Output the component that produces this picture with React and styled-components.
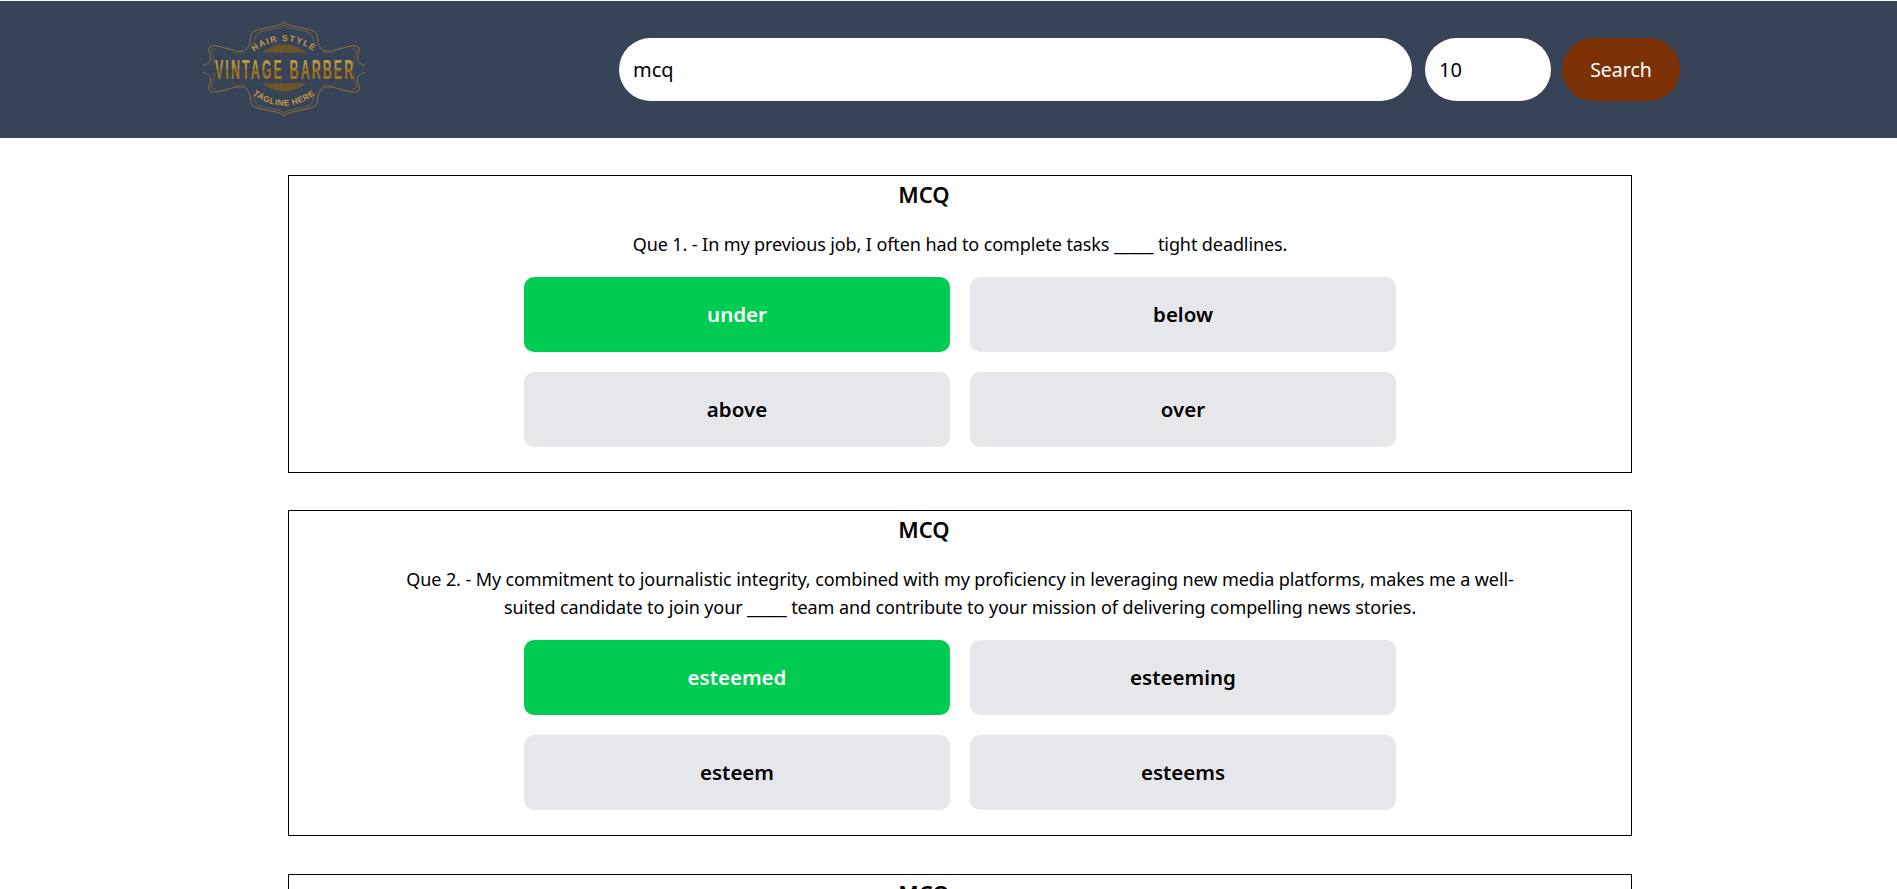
import React from "react";
import styled, { createGlobalStyle } from "styled-components";

const GlobalStyle = createGlobalStyle`
  html, body {
    margin: 0;
    height: 889px;
    overflow: hidden;
    background: #fff;
  }
  body {
    font-family: "Noto Sans", "Open Sans", "Liberation Sans", sans-serif;
    color: #000;
  }
  * {
    box-sizing: border-box;
  }
`;

const Header = styled.header`
  height: 137px;
  margin-top: 1px;
  background: #374357;
  display: flex;
  align-items: center;
  padding: 0 217px 0 200px;
`;

const LogoBox = styled.div`
  width: 170px;
  height: 107px;
  flex-shrink: 0;
`;

const SearchForm = styled.form`
  flex: 1;
  display: flex;
  align-items: center;
  margin-left: 249px;
`;

const Field = styled.input`
  height: 63px;
  width: ${(props) => props.$width}px;
  margin-right: ${(props) => props.$gap}px;
  border: none;
  outline: none;
  border-radius: 32px;
  padding: 0 14px;
  background: #fff;
  color: #000;
  font-family: inherit;
  font-size: 20px;
`;

const SearchButton = styled.button`
  width: 118px;
  height: 63px;
  border: none;
  border-radius: 32px;
  background: #7c3206;
  color: #fff;
  font-family: inherit;
  font-size: 19.5px;
`;

const Main = styled.main`
  width: 1344px;
  margin: 37px 0 0 288px;
  display: flex;
  flex-direction: column;
  gap: 37.4px;
`;

const Card = styled.section`
  border: 1px solid #000;
  padding: 4px 0 25px;
  display: flex;
  flex-direction: column;
  align-items: center;
`;

const CardTitle = styled.h2`
  margin: 0 72px 0 0;
  font-size: 22px;
  line-height: 28px;
  font-weight: 600;
`;

const Question = styled.p`
  width: 1128px;
  margin: 22px 0 19px;
  font-size: 18px;
  line-height: 28px;
  letter-spacing: -0.1px;
  text-align: center;
`;

const Options = styled.div`
  display: grid;
  grid-template-columns: 426px 426px;
  gap: 20px;
`;

const Option = styled.div`
  height: 75px;
  padding-bottom: 2px;
  border-radius: 10px;
  display: flex;
  align-items: center;
  justify-content: center;
  font-size: 20.5px;
  font-weight: 600;
  background: ${(props) => (props.$correct ? "#00cc52" : "#e5e7eb")};
  color: ${(props) => (props.$correct ? "#fff" : "#000")};
`;

const questions = [
  {
    text: "Que 1. - In my previous job, I often had to complete tasks _____ tight deadlines.",
    options: ["under", "below", "above", "over"],
  },
  {
    text: "Que 2. - My commitment to journalistic integrity, combined with my proficiency in leveraging new media platforms, makes me a well-suited candidate to join your _____ team and contribute to your mission of delivering compelling news stories.",
    options: ["esteemed", "esteeming", "esteem", "esteems"],
  },
];

// drawn in the coordinates of a 3x crop of the logo, mirrored from one quarter
const Logo = () => (
  <svg viewBox="60 50 510 321" width="170" height="107" fill="none">
    <defs>
      <linearGradient id="gold" gradientUnits="userSpaceOnUse" x1="0" y1="178" x2="0" y2="238">
        <stop offset="0" stopColor="#c29a45" />
        <stop offset="0.5" stopColor="#b58c35" />
        <stop offset="0.56" stopColor="#9a6a15" />
        <stop offset="1" stopColor="#a5771f" />
      </linearGradient>
      <pattern id="stripes" width="5" height="5" patternUnits="userSpaceOnUse">
        <rect width="5" height="5" fill="#5f4c2a" />
        <rect width="2" height="5" fill="#7d6025" />
      </pattern>
      <path id="arcTop" d="M182 190 Q312 60 442 190" />
      <path id="arcBottom" d="M172 244 Q312 394 452 244" />
      <g id="corner" stroke="#94733a" strokeWidth="3" strokeLinecap="round">
        <path d="M312 68 C300 82 270 82 240 90 C222 94 212 100 212 112 C212 130 205 150 190 155 C170 160 140 145 110 140 C92 137 82 145 88 160 C92 175 100 190 70 198" />
        <path d="M312 78 C295 90 260 90 238 99 C224 105 226 120 220 135" strokeWidth="2" />
        <path d="M108 148 C95 147 92 155 96 165 C100 178 108 190 100 197" strokeWidth="2" />
        <path d="M160 161 H196" strokeWidth="2" strokeDasharray="2 5" />
      </g>
    </defs>
    <use href="#corner" />
    <use href="#corner" transform="translate(624 0) scale(-1 1)" />
    <use href="#corner" transform="translate(0 418) scale(1 -1)" />
    <use href="#corner" transform="translate(624 418) scale(-1 -1)" />
    <path d="M245 160 Q312 110 380 160 Z" fill="url(#stripes)" />
    <path d="M245 252 Q312 302 380 252 Z" fill="url(#stripes)" />
    <g fontFamily="Liberation Sans, sans-serif" fontWeight="700" fill="#c49a45">
      <text fontSize="26" letterSpacing="4">
        <textPath href="#arcTop" startOffset="50%" textAnchor="middle">HAIR STYLE</textPath>
      </text>
      <text fontSize="25" letterSpacing="1.5">
        <textPath href="#arcBottom" startOffset="50%" textAnchor="middle">TAGLINE HERE</textPath>
      </text>
    </g>
    <text
      x="233"
      y="238"
      transform="scale(0.45 1)"
      fontFamily="Liberation Sans, sans-serif"
      fontWeight="700"
      fontSize="83"
      textLength="922"
      lengthAdjust="spacing"
      fill="url(#gold)"
    >
      VINTAGE BARBER
    </text>
  </svg>
);

const QuestionCard = ({ question }) => (
  <Card>
    <CardTitle>MCQ</CardTitle>
    {question && (
      <>
        <Question>{question.text}</Question>
        <Options>
          {question.options.map((option, index) => (
            <Option key={option} $correct={index === 0}>
              {option}
            </Option>
          ))}
        </Options>
      </>
    )}
  </Card>
);

export default function App() {
  return (
    <>
      <GlobalStyle />
      <Header>
        <LogoBox>
          <Logo />
        </LogoBox>
        <SearchForm onSubmit={(e) => e.preventDefault()}>
          <Field $width={793} $gap={13} defaultValue="mcq" />
          <Field $width={126} $gap={11} defaultValue="10" />
          <SearchButton type="submit">Search</SearchButton>
        </SearchForm>
      </Header>
      <Main>
        {questions.map((question) => (
          <QuestionCard key={question.text} question={question} />
        ))}
        <QuestionCard />
      </Main>
    </>
  );
}
